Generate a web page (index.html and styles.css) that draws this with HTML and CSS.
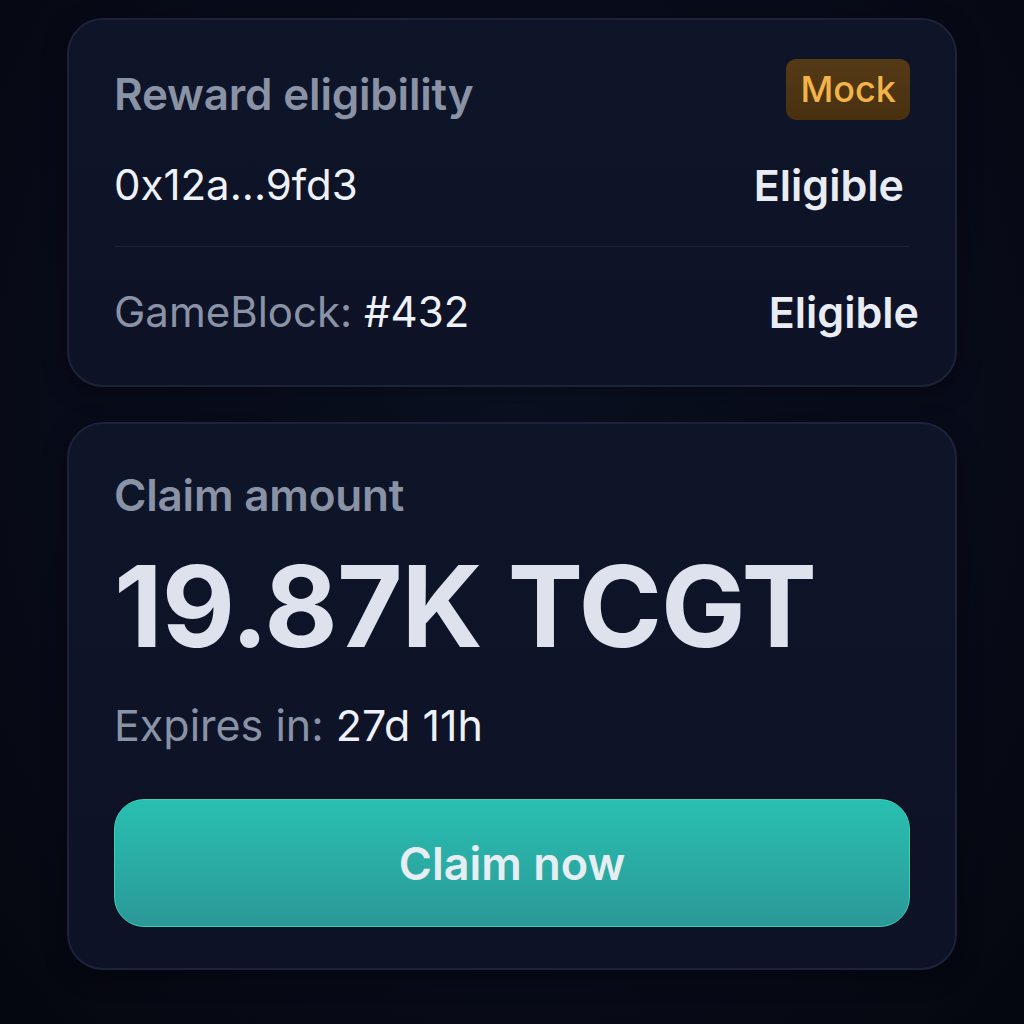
FILE: index.html
```html
<!DOCTYPE html>
<html>
<head>
<meta charset="utf-8">
<link rel="stylesheet" href="styles.css">
</head>
<body>
<main class="page">
  <section class="card card-elig">
    <div class="head-row">
      <h2 class="label">Reward eligibility</h2>
      <span class="badge">Mock</span>
    </div>
    <div class="row row-addr">
      <span class="value">0x12a...9fd3</span>
      <span class="status">Eligible</span>
    </div>
    <div class="divider"></div>
    <div class="row row-block">
      <span class="value"><span class="muted">GameBlock:</span> #432</span>
      <span class="status status-wide">Eligible</span>
    </div>
  </section>

  <section class="card card-claim">
    <h2 class="label">Claim amount</h2>
    <div class="amount">19.87K TCGT</div>
    <div class="expires"><span class="muted">Expires in:</span> 27d 11h</div>
    <button class="claim-btn">Claim now</button>
  </section>
</main>
</body>
</html>
```

FILE: styles.css
```css
* { box-sizing: border-box; }
html, body {
  margin: 0;
  padding: 0;
}
body {
  width: 1024px;
  height: 1024px;
  background: radial-gradient(ellipse at 50% 40%, #0b1122 0%, #080b19 60%, #05070f 100%);
  font-family: Inter, "Noto Sans", sans-serif;
  color: #e6eaf2;
  overflow: hidden;
}
.page {
  padding: 18px 67px 0 67px;
  display: flex;
  flex-direction: column;
  gap: 35px;
}
.card {
  background: linear-gradient(180deg, #0f1529 0%, #0d1226 100%);
  border: 2px solid #1c2339;
  border-radius: 36px;
  box-shadow: 0 6px 24px rgba(0,0,0,0.35);
}
.card-elig {
  height: 369px;
  padding: 39px 45px 0 45px;
}
.head-row {
  display: flex;
  justify-content: space-between;
  align-items: center;
  height: 61px;
}
.head-row .label {
  padding-top: 9px;
}
.label {
  margin: 0;
  font-size: 44px;
  line-height: 48px;
  font-weight: 600;
  color: #8a92a6;
  letter-spacing: -0.2px;
}
.badge {
  background: linear-gradient(180deg, #553a16 0%, #48300f 100%);
  color: #f2b449;
  font-size: 36px;
  font-weight: 500;
  height: 61px;
  line-height: 61px;
  padding: 0 14px;
  border-radius: 10px;
}
.row {
  display: flex;
  justify-content: space-between;
  align-items: center;
  height: 48px;
  font-size: 42px;
  line-height: 48px;
}
.row-addr {
  margin-top: 41px;
  padding-right: 6px;
}
.value {
  font-weight: 400;
  color: #eef1f7;
}
.muted {
  color: #8a92a6;
}
.status {
  font-size: 43px;
  font-weight: 600;
  color: #e9ecf3;
}
.status-wide {
  margin-right: -9px;
}
.divider {
  height: 1px;
  background: #1b2236;
  margin-top: 37px;
}
.row-block {
  margin-top: 41px;
}
.card-claim {
  height: 548px;
  padding: 47px 45px 0 45px;
  display: flex;
  flex-direction: column;
}
.amount {
  margin-top: 31px;
  font-size: 113px;
  line-height: 113px;
  font-weight: 700;
  color: #dde2ec;
  letter-spacing: -1px;
}
.expires {
  margin-top: 38px;
  font-size: 43px;
  line-height: 48px;
  color: #eef1f7;
}
.claim-btn {
  margin-top: 50px;
  height: 128px;
  width: 100%;
  border: 1.5px solid #33d4c2;
  border-radius: 30px;
  background: linear-gradient(180deg, #29bfb1 0%, #2aa8a2 60%, #2b9898 100%);
  color: #e6eef3;
  font-family: Inter, "Noto Sans", sans-serif;
  font-size: 45px;
  font-weight: 600;
  cursor: pointer;
  box-shadow: 0 0 0 1px rgba(0,0,0,0.5);
}
```
